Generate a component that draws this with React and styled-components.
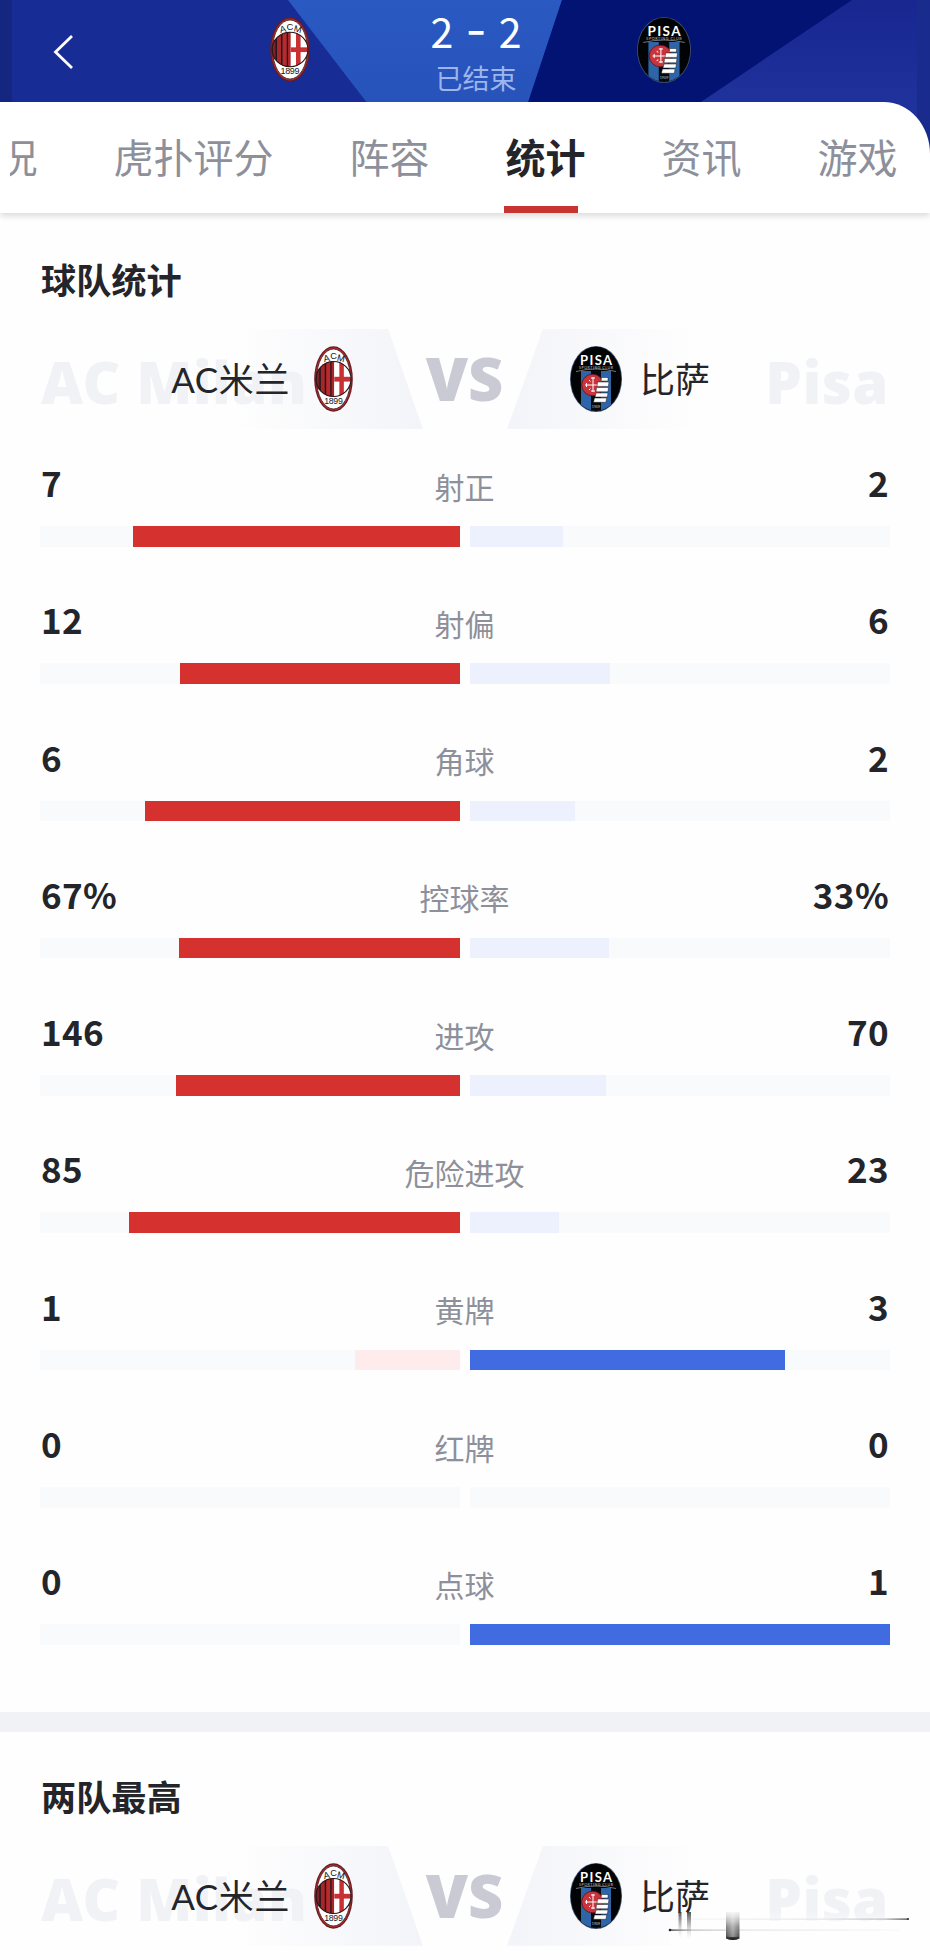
import React from "react";
import styled, { createGlobalStyle } from "styled-components";

const tabs = ["虎扑评分", "阵容", "统计", "资讯", "游戏"];

const stats = [
  { label: "射正", home: 7, away: 2 },
  { label: "射偏", home: 12, away: 6 },
  { label: "角球", home: 6, away: 2 },
  { label: "控球率", home: 67, away: 33, unit: "%" },
  { label: "进攻", home: 146, away: 70 },
  { label: "危险进攻", home: 85, away: 23 },
  { label: "黄牌", home: 1, away: 3 },
  { label: "红牌", home: 0, away: 0 },
  { label: "点球", home: 0, away: 1 },
];

const share = (value, total) => (total ? (value / total) * 100 : 0);

const MilanBadge = ({ width, height }) => (
  <svg
    width={width}
    height={height}
    viewBox="0 0 40 66"
    preserveAspectRatio="none"
  >
    <defs>
      <clipPath id="milanBall">
        <ellipse cx="20" cy="33" rx="18" ry="17.5" />
      </clipPath>
    </defs>
    <ellipse cx="20" cy="33" rx="19.8" ry="32.8" fill="#6b1a20" />
    <ellipse cx="20" cy="33" rx="18.6" ry="31.4" fill="#b03034" />
    <ellipse cx="20" cy="33" rx="17.4" ry="30" fill="#fff" stroke="#3a1517" strokeWidth="0.8" />
    <g clipPath="url(#milanBall)">
      <rect x="1" y="15" width="19" height="36" fill="#26141a" />
      <rect x="2.5" y="15" width="3" height="36" fill="#7c2226" />
      <rect x="7" y="15" width="4" height="36" fill="#a5282b" />
      <rect x="12.5" y="15" width="4.2" height="36" fill="#b82a2d" />
      <rect x="18" y="15" width="2.8" height="36" fill="#a82629" />
      <rect x="20.8" y="15" width="18" height="36" fill="#fff" />
      <rect x="26" y="15" width="4.6" height="36" fill="#c93033" />
      <rect x="20.8" y="30.8" width="18" height="4.8" fill="#c93033" />
    </g>
    <ellipse cx="20" cy="33" rx="18" ry="17.5" fill="none" stroke="#2b1619" strokeWidth="1.2" />
    <g fill="#141414" fontFamily="Liberation Sans, sans-serif" textAnchor="middle">
      <text x="13.5" y="15.5" fontSize="9.5" transform="rotate(-14 13.5 15.5)">A</text>
      <text x="20" y="13.5" fontSize="9.5">C</text>
      <text x="27" y="15.5" fontSize="9.5" transform="rotate(14 27 15.5)">M</text>
      <text x="20" y="58" fontSize="9" textLength="19">1899</text>
    </g>
  </svg>
);

const PisaBadge = ({ width, height }) => (
  <svg
    width={width}
    height={height}
    viewBox="0 0 52 66"
    preserveAspectRatio="none"
  >
    <defs>
      <clipPath id="pisaOval">
        <ellipse cx="26" cy="33" rx="25" ry="32" />
      </clipPath>
    </defs>
    <ellipse cx="26" cy="33" rx="26" ry="33" fill="#40536f" />
    <ellipse cx="26" cy="33" rx="25.2" ry="32.2" fill="#020304" />
    <g clipPath="url(#pisaOval)">
      <rect x="11" y="25" width="30" height="41" fill="#2e64a8" />
      <rect x="21" y="25" width="10" height="41" fill="#05080d" />
    </g>
    <path d="M6 25.5Q26 20.5 46 25.5" fill="none" stroke="#8c8f94" strokeWidth="0.8" />
    <circle cx="22.5" cy="39" r="10.8" fill="#c9343c" stroke="#54151c" strokeWidth="0.8" />
    <path
      d="M23 31v15M15 39h15M21 32h4M21 45h4M16.5 37v4M19 34l1.5 1.5M19 44l1.5-1.5"
      stroke="#fff"
      strokeWidth="1"
      fill="none"
    />
    <path
      d="M31.5 31.5h6.500v3.500h-7zM27.500 36h11.500l-.6 4.400H27zM26.500 41.500h12l-.6 4.300H26zM26 47h12l-.7 4H25zM24.500 52h12.200l-.8 4.300H23.500z"
      fill="#fff"
      stroke="#161b22"
      strokeWidth="0.5"
    />
    <g fill="#fff" textAnchor="middle" fontFamily="Lato, sans-serif">
      <text x="26" y="19" fontSize="13" fontWeight="700" textLength="32">PISA</text>
      <text x="26" y="23.3" fontSize="3.6" textLength="34" opacity="0.7">SPORTING CLUB</text>
      <text x="26" y="62" fontSize="3.6" opacity="0.7">1909</text>
    </g>
  </svg>
);

const Versus = () => (
  <VersusRow>
    <Side>
      <Ghost>AC Milan</Ghost>
      <TeamName $home>AC米兰</TeamName>
      <MilanBadge width={39} height={66} />
    </Side>
    <VsText>VS</VsText>
    <Side $away>
      <PisaBadge width={52} height={66} />
      <TeamName>比萨</TeamName>
      <Ghost $away>Pisa</Ghost>
    </Side>
  </VersusRow>
);

const StatRow = ({ label, home, away, unit = "" }) => {
  const total = home + away;
  return (
    <Stat>
      <Figures>
        <Value>
          {home}
          {unit}
        </Value>
        <StatLabel>{label}</StatLabel>
        <Value $away>
          {away}
          {unit}
        </Value>
      </Figures>
      <Bars>
        <Track $home>
          <Fill
            $color={home >= away ? "#d5312e" : "#fdeceb"}
            style={{ width: `${share(home, total)}%` }}
          />
        </Track>
        <Track>
          <Fill
            $color={away >= home ? "#416be0" : "#edf0fd"}
            style={{ width: `${share(away, total)}%` }}
          />
        </Track>
      </Bars>
    </Stat>
  );
};

const App = () => {
  return (
    <Page>
      <GlobalStyle />
      <Header>
        <HeaderArt viewBox="0 0 930 160" preserveAspectRatio="none">
          <defs>
            <linearGradient id="beam" x1="0" y1="0" x2="0" y2="1">
              <stop offset="0" stopColor="#2a59c2" />
              <stop offset="1" stopColor="#2550b6" />
            </linearGradient>
            <linearGradient id="corner" x1="0" y1="0" x2="0" y2="1">
              <stop offset="0" stopColor="#182690" />
              <stop offset="1" stopColor="#2338a2" />
            </linearGradient>
          </defs>
          <rect width="930" height="160" fill="#182c96" />
          <rect width="12" height="160" fill="#14267f" />
          <path d="M288 0H562L509 160H411Z" fill="url(#beam)" />
          <path d="M562 0H930V160H509Z" fill="#031374" />
          <path d="M852 0H930V160H615Z" fill="url(#corner)" />
          <rect x="917" width="13" height="160" fill="#192c8e" />
        </HeaderArt>
        <BackButton viewBox="0 0 20 36">
          <path d="M18.5 2L2 18L18.5 34" fill="none" stroke="#fff" strokeWidth="2.8" />
        </BackButton>
        <MilanBadge width={40} height={65} />
        <Score>
          <Goals>
            2 <Dash>-</Dash> 2
          </Goals>
          <Status>已结束</Status>
        </Score>
        <PisaBadge width={54} height={66} />
      </Header>
      <TabBar>
        <CutTab>况</CutTab>
        {tabs.map((tab) => (
          <Tab key={tab} $active={tab === "统计"}>
            {tab}
          </Tab>
        ))}
      </TabBar>
      <Section>
        <SectionTitle>球队统计</SectionTitle>
        <Versus />
        <StatList>
          {stats.map((stat) => (
            <StatRow key={stat.label} {...stat} />
          ))}
        </StatList>
      </Section>
      <Divider />
      <Section $tight>
        <SectionTitle>两队最高</SectionTitle>
        <Versus />
      </Section>
      <Smudge viewBox="0 0 250 50">
        <defs>
          <linearGradient id="blob" x1="0" y1="0" x2="0" y2="1">
            <stop offset="0" stopColor="#bbb" stopOpacity="0.2" />
            <stop offset="0.5" stopColor="#8a8a8a" />
            <stop offset="0.85" stopColor="#555" />
            <stop offset="1" stopColor="#111" />
          </linearGradient>
          <linearGradient id="blobShade" x1="0" y1="0" x2="1" y2="0">
            <stop offset="0" stopColor="#fff" stopOpacity="0" />
            <stop offset="0.5" stopColor="#fff" stopOpacity="0.4" />
            <stop offset="1" stopColor="#fff" stopOpacity="0" />
          </linearGradient>
          <linearGradient id="lineLeft" x1="0" y1="0" x2="1" y2="0">
            <stop offset="0" stopColor="#222" />
            <stop offset="0.1" stopColor="#bbb" />
            <stop offset="0.35" stopColor="#e4e4e4" />
            <stop offset="1" stopColor="#f8f8f8" />
          </linearGradient>
          <linearGradient id="lineRight" x1="0" y1="0" x2="1" y2="0">
            <stop offset="0" stopColor="#f8f8f8" />
            <stop offset="0.65" stopColor="#e4e4e4" />
            <stop offset="0.9" stopColor="#bbb" />
            <stop offset="1" stopColor="#333" />
          </linearGradient>
          <linearGradient id="drip" x1="0" y1="0" x2="0" y2="1">
            <stop offset="0" stopColor="#333" stopOpacity="0.85" />
            <stop offset="1" stopColor="#bbb" stopOpacity="0" />
          </linearGradient>
          <linearGradient id="veil" x1="0" y1="0" x2="0" y2="1">
            <stop offset="0" stopColor="#fefefe" stopOpacity="0" />
            <stop offset="0.5" stopColor="#fefefe" stopOpacity="0.8" />
            <stop offset="1" stopColor="#fefefe" />
          </linearGradient>
        </defs>
        <rect x="5" y="11" width="238" height="34" fill="url(#veil)" />
        <rect x="10" y="18.5" width="233" height="1.2" fill="url(#lineRight)" />
        <rect x="4" y="29.5" width="230" height="1.2" fill="url(#lineLeft)" />
        <circle cx="243" cy="19" r="1.1" fill="#333" />
        <circle cx="5" cy="30" r="1.3" fill="#222" />
        <rect x="13.5" y="12" width="3" height="26" fill="url(#drip)" />
        <rect x="22" y="12" width="4" height="27" fill="url(#drip)" />
        <path d="M61 12H74.5V38.5Q68 41.5 61 38.5Z" fill="url(#blob)" />
        <path d="M61 12H74.5V37H61Z" fill="url(#blobShade)" />
      </Smudge>
    </Page>
  );
};

const GlobalStyle = createGlobalStyle`
  * {
    box-sizing: border-box;
  }
  body {
    margin: 0;
    background: #fefefe;
    font-family: "Noto Sans CJK SC", sans-serif;
  }
  svg {
    display: block;
    flex-shrink: 0;
  }
`;

const Page = styled.div`
  position: relative;
  width: 930px;
  height: 1960px;
  overflow: hidden;
  color: #24252a;
`;

const Header = styled.div`
  position: relative;
  display: flex;
  align-items: flex-start;
  height: 102px;
  padding: 17px 0 0 53px;
  > svg {
    position: relative;
  }
`;

const HeaderArt = styled.svg`
  && {
    position: absolute;
    top: 0;
    left: 0;
    width: 930px;
    height: 160px;
  }
`;

const BackButton = styled.svg`
  width: 21px;
  height: 36px;
  margin: 17px 196px 0 0;
`;

const Score = styled.div`
  position: relative;
  display: flex;
  flex-direction: column;
  align-items: center;
  width: 132px;
  margin: -17px 95px 0 100px;
  white-space: nowrap;
`;

const Goals = styled.div`
  display: flex;
  justify-content: space-between;
  width: 91px;
  height: 60px;
  color: #fff;
  font-size: 41px;
  line-height: 60px;
`;

const Dash = styled.span`
  font-family: Inter, sans-serif;
  font-size: 46px;
  line-height: 60px;
`;

const Status = styled.div`
  color: #9db4ec;
  font-size: 27px;
  line-height: 36px;
`;

const TabBar = styled.div`
  position: relative;
  display: flex;
  align-items: center;
  height: 111px;
  padding-left: 9.5px;
  background: #fff;
  border-top-right-radius: 46px 52px;
  box-shadow: 0 3px 6px rgba(0, 0, 0, 0.14);
  font-size: 40px;
  line-height: 109px;
  white-space: nowrap;
`;

const CutTab = styled.div`
  display: flex;
  justify-content: flex-end;
  width: 28px;
  height: 111px;
  overflow: hidden;
  color: #8d909a;
`;

const Tab = styled.div`
  position: relative;
  height: 111px;
  margin-left: 76px;
  color: ${(props) => (props.$active ? "#24252a" : "#8d909a")};
  font-weight: ${(props) => (props.$active ? 700 : 400)};
  &::after {
    content: "";
    display: ${(props) => (props.$active ? "block" : "none")};
    position: absolute;
    left: -2px;
    bottom: 0;
    width: 74px;
    height: 7px;
    background: #c83431;
  }
`;

const Section = styled.div`
  padding: ${(props) => (props.$tight ? 38 : 40)}px 40px 0;
`;

const SectionTitle = styled.div`
  height: 52px;
  margin-bottom: 24px;
  padding-left: 1px;
  font-size: 35.2px;
  font-weight: 700;
  line-height: 51px;
`;

const VersusRow = styled.div`
  display: grid;
  grid-template-columns: 383px 84px 383px;
  height: 100px;
`;

const Side = styled.div`
  position: relative;
  display: flex;
  align-items: center;
  justify-content: ${(props) => (props.$away ? "flex-start" : "flex-end")};
  padding: ${(props) => (props.$away ? "0 0 0 63px" : "0 70px 0 0")};
  background: linear-gradient(
    ${(props) => (props.$away ? "to left" : "to right")},
    rgba(242, 244, 250, 0) 50%,
    #f3f4f9 100%
  );
  clip-path: ${(props) =>
    props.$away
      ? "polygon(36px 0, 100% 0, 100% 100%, 0 100%)"
      : "polygon(0 0, 348px 0, 100% 100%, 0 100%)"};
  > svg {
    position: relative;
  }
`;

// faded latin team name behind the real one
const Ghost = styled.div`
  position: absolute;
  top: 14px;
  ${(props) => (props.$away ? "right: 1px;" : "left: 1px;")}
  color: #f1f2f6;
  font-family: "Noto Sans", sans-serif;
  font-size: 58px;
  font-weight: 900;
  line-height: 78px;
  letter-spacing: 0.5px;
  white-space: nowrap;
`;

const TeamName = styled.div`
  position: relative;
  margin: ${(props) => (props.$home ? "0 24px 0 0" : "0 0 0 18px")};
  font-family: Lato, "Noto Sans CJK SC", sans-serif;
  font-size: 35px;
  line-height: 100px;
  letter-spacing: ${(props) => (props.$home ? "0.6px" : "0")};
`;

const VsText = styled.div`
  margin: 0 -3px 0 -4px;
  color: #c9cad4;
  font-family: "Noto Sans", sans-serif;
  font-size: 61px;
  font-weight: 900;
  line-height: 97px;
  text-align: center;
`;

const StatList = styled.div`
  display: flex;
  flex-direction: column;
  padding: 28px 0 19px;
`;

const Stat = styled.div`
  height: 137.3px;
`;

const Figures = styled.div`
  display: grid;
  grid-template-columns: 1fr auto 1fr;
  align-items: center;
  height: 69px;
  padding-bottom: 20px;
`;

const Value = styled.div`
  padding: 0 1px 5px;
  font-size: 35px;
  font-weight: 700;
  line-height: 50px;
  letter-spacing: 0.4px;
  text-align: ${(props) => (props.$away ? "right" : "left")};
`;

const StatLabel = styled.div`
  padding: 2px 1px 0 0;
  color: #8d909a;
  font-size: 30px;
  line-height: 50px;
`;

const Bars = styled.div`
  display: grid;
  grid-template-columns: 1fr 1fr;
  gap: 10px;
`;

const Track = styled.div`
  display: flex;
  justify-content: ${(props) => (props.$home ? "flex-end" : "flex-start")};
  height: 20.5px;
  background: #f9fafc;
`;

const Fill = styled.div`
  background: ${(props) => props.$color};
`;

const Divider = styled.div`
  height: 20px;
  background: #f0f2f6;
`;

const Smudge = styled.svg`
  position: absolute;
  left: 665px;
  top: 1900px;
  width: 250px;
  height: 50px;
`;

export default App;
